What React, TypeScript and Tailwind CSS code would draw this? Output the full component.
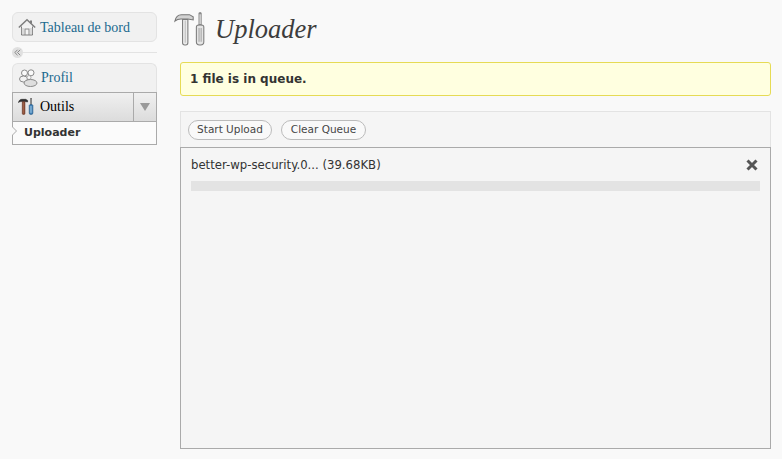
import React from 'react';

const HomeIcon = () => (
  <svg width="18" height="18" viewBox="0 0 18 18" fill="none" stroke="#7d7d7d" strokeWidth="1">
    <path d="M3.500 8.500v8.500h11V8.500" fill="#f4f4f4" />
    <path d="M.8 9.500 9 1.800l8.200 7.700" strokeWidth="1.500" />
    <path d="M13 2.500v3" strokeWidth="2" />
    <path d="M7 17v-6h4v6" stroke="#8a8a8a" />
    <path d="M3.500 11h3.500M11 11h3.500M3.500 13h3.500M11 13h3.500M3.500 15h3.500M11 15h3.500" stroke="#c0c0c0" />
  </svg>
);

const UsersIcon = () => (
  <svg width="19" height="18" viewBox="0 0 19 18" fill="none" stroke="#8a8a8a" strokeWidth="1">
    <circle cx="5.500" cy="4" r="3" fill="#fafafa" />
    <circle cx="12" cy="3.800" r="3" fill="#fafafa" />
    <ellipse cx="4.500" cy="10" rx="4" ry="3" fill="#f2f2f2" />
    <circle cx="10" cy="8.500" r="2" fill="#fafafa" stroke="#aaa" />
    <ellipse cx="11.500" cy="14" rx="6.500" ry="3.500" fill="#dedede" />
  </svg>
);

const ToolsIcon = ({ color }: { color: boolean }) => (
  <svg width="100%" height="100%" viewBox="0 0 30 32" fill="none">
    <path
      d="M.8 8.500C1.500 5 4 2.500 7 2.500h7.500L18 4.500v3l-5-1H6.500C4 6.500 2 7.500.8 8.500z"
      fill={color ? '#333' : '#d2d2d2'}
      stroke={color ? '#1e1e1e' : '#777'}
    />
    <path
      d="M8 7h5v22a2 2 0 0 1-2 2h-1a2 2 0 0 1-2-2z"
      fill={color ? '#8a4a32' : '#ececec'}
      stroke={color ? '#5a2a1c' : '#7c7c7c'}
    />
    <path d="M10.500 8v21" stroke={color ? '#b87a5f' : '#bdbdbd'} />
    <path d="M24.500 1.500v10" stroke={color ? '#444' : '#8a8a8a'} strokeWidth="3" strokeLinecap="round" />
    <path d="M24.500 2v9.500" stroke="#f2f2f2" />
    <path
      d="M21 14c0-2.500 7-2.500 7 0v14a3 3 0 0 1-3 3h-1a3 3 0 0 1-3-3z"
      fill={color ? '#3f7fb5' : '#e4e4e4'}
      stroke={color ? '#1f4f7a' : '#7c7c7c'}
    />
    <path d="M23.500 15v13M25.500 15v13" stroke={color ? '#a9cde8' : '#a5a5a5'} />
  </svg>
);

export default function App() {
  return (
    <div className="flex h-[459px] w-[782px] overflow-hidden bg-[#f9f9f9] font-['Liberation_Serif',serif]">
      {/* left menu */}
      <div className="ml-3 mt-3 w-[145px] shrink-0">
        <div className="flex h-[30px] items-center gap-[4px] rounded-[6px] border border-[#e3e3e3] bg-[#f1f1f1] pl-[5px] text-[14px] text-[#1b6a8f]">
          <HomeIcon />
          <span>Tableau de bord</span>
        </div>

        <div className="mt-[5px] flex h-[11px] items-center">
          <div className="flex h-[11px] w-[11px] shrink-0 items-center justify-center rounded-full bg-[#e0e0e0]">
            <svg width="7" height="7" viewBox="0 0 7 7" fill="none" stroke="#888" strokeWidth="1">
              <path d="M3.500.8.800 3.500l2.700 2.700M6.200.8 3.500 3.500l2.700 2.700" />
            </svg>
          </div>
          <div className="h-px flex-1 bg-[#e3e3e3]" />
        </div>

        <div className="mt-[5px] flex h-[29px] items-center gap-[3px] rounded-t-[6px] border border-b-0 border-[#e3e3e3] bg-[#f1f1f1] pb-[1px] pl-[6px] text-[14px] text-[#1b6a8f]">
          <UsersIcon />
          <span>Profil</span>
        </div>

        <div className="flex h-[30px] items-stretch border border-[#aaa] bg-gradient-to-b from-[#f0f0f0] to-[#dcdcdc] text-[14px] text-black">
          <div className="flex flex-1 items-center gap-[6px] pb-[1px] pl-[5px]">
            <div className="h-[17px] w-[16px]">
              <ToolsIcon color />
            </div>
            <span>Outils</span>
          </div>
          <div className="flex w-[23px] items-center justify-center border-l border-[#aaa]">
            <div className="h-0 w-0 border-x-[5px] border-t-[8px] border-x-transparent border-t-[#999]" />
          </div>
        </div>

        <div className="relative flex h-[23px] items-center border border-t-0 border-[#aaa] bg-[#fbfbfb] pl-[11px] font-['DejaVu_Sans',sans-serif] text-[11px] font-bold text-[#333]">
          <div className="absolute left-[-1px] top-[4px] h-0 w-0 border-y-[5px] border-l-[5px] border-y-transparent border-l-[#aaa]" />
          <div className="absolute left-[-1px] top-[5px] h-0 w-0 border-y-[4px] border-l-[4px] border-y-transparent border-l-[#f9f9f9]" />
          Uploader
        </div>
      </div>

      {/* main */}
      <div className="ml-[17px] w-[608px]">
        <div className="flex h-[62px] items-start pt-[12px]">
          <div className="h-[34px] w-[32px]">
            <ToolsIcon color={false} />
          </div>
          <h2 className="ml-[9px] mt-[2px] text-[26.500px] italic leading-[30px] text-[#3d3d3d]">Uploader</h2>
        </div>

        <div className="ml-[6px] flex h-[34px] w-[591px] items-center rounded-[3px] border border-[#e6db55] bg-[#ffffe0] pl-[9px] font-['DejaVu_Sans',sans-serif] text-[12px] font-bold text-[#333]">
          1 file is in queue.
        </div>

        <div className="ml-[6px] mt-[15px] w-[591px]">
          <div className="flex h-[36px] items-center gap-[9px] border border-b-0 border-[#e3e3e3] bg-[#f5f5f5] pl-[7px]">
            <button className="flex h-[20px] w-[84px] items-center justify-center rounded-full border border-[#bbb] bg-[#f9f9f9] pt-[1px] font-['DejaVu_Sans',sans-serif] text-[10.500px] text-[#464646]">
              Start Upload
            </button>
            <button className="flex h-[20px] w-[85px] items-center justify-center rounded-full border border-[#bbb] bg-[#f9f9f9] pt-[1px] font-['DejaVu_Sans',sans-serif] text-[10.500px] text-[#464646]">
              Clear Queue
            </button>
          </div>
          <div className="h-[302px] border border-[#aaa] bg-[#f5f5f5] pl-[10px] pr-[10px] pt-[10px] font-['DejaVu_Sans',sans-serif] text-[11.700px] text-[#333]">
            <div className="flex h-[14px] items-center justify-between">
              <span className="pt-[2px]">better-wp-security.0... (39.68KB)</span>
              <svg className="mr-[2px]" width="12" height="12" viewBox="0 0 12 12" stroke="#555" strokeWidth="3">
                <path d="M1.500 1.500l9 9M10.500 1.500l-9 9" />
              </svg>
            </div>
            <div className="mt-[9px] h-[10px] bg-[#e3e3e3]" />
          </div>
        </div>
      </div>
    </div>
  );
}
